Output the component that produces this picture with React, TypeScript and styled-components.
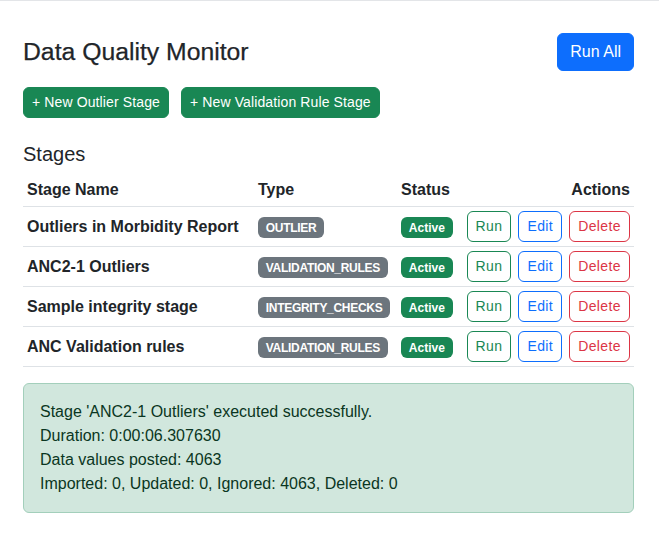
import React from "react";
import styled, { createGlobalStyle } from "styled-components";

const GlobalStyle = createGlobalStyle`
  html, body {
    margin: 0;
    padding: 0;
    background: #ffffff;
  }
  body {
    font-family: "Liberation Sans", Arial, sans-serif;
    font-size: 16px;
    line-height: 1.5;
    color: #212529;
  }
  * { box-sizing: border-box; }
`;

const Page = styled.div`
  border-top: 1px solid #e3e5e8;
  padding: 32px 25px 24px 23px;
`;

const HeaderRow = styled.div`
  display: flex;
  align-items: center;
  justify-content: space-between;
  margin-bottom: 16px;
`;

const Title = styled.h3`
  margin: 0;
  font-size: 24.75px;
  font-weight: 500;
  line-height: 1.2;
  color: #212529;
  -webkit-text-stroke: 0.25px #212529;
`;

type Variant = "primary" | "success";
const solid: Record<Variant, string> = {
  primary: "#0d6efd",
  success: "#198754",
};

const SolidButton = styled.button<{ $variant: Variant; $small?: boolean }>`
  font-family: inherit;
  display: inline-block;
  border: 1px solid ${(p) => solid[p.$variant]};
  background: ${(p) => solid[p.$variant]};
  color: #fff;
  font-size: ${(p) => (p.$small ? "14px" : "16px")};
  line-height: 1.5;
  padding: ${(p) => (p.$small ? "4px 8px" : "6px 12px")};
  letter-spacing: ${(p) => (p.$small ? "0.12px" : "0")};
  border-radius: 6px;
  cursor: pointer;
`;

const Toolbar = styled.div`
  display: flex;
  gap: 12px;
  margin-bottom: 24px;
`;

const SectionTitle = styled.h5`
  margin: 0 0 8px;
  font-size: 20px;
  font-weight: 500;
  line-height: 1.2;
`;

const Table = styled.table`
  width: 100%;
  border-collapse: collapse;
  table-layout: fixed;
  margin-bottom: 16px;
`;

const Th = styled.th<{ $width?: number; $right?: boolean }>`
  width: ${(p) => (p.$width ? `${p.$width}px` : "auto")};
  text-align: ${(p) => (p.$right ? "right" : "left")};
  padding: 4px;
  font-weight: 700;
  line-height: 24px;
  border-bottom: 1px solid #dee2e6;
`;

const Td = styled.td<{ $bold?: boolean; $right?: boolean }>`
  padding: 4px;
  vertical-align: middle;
  font-weight: ${(p) => (p.$bold ? 700 : 400)};
  text-align: ${(p) => (p.$right ? "right" : "left")};
  border-bottom: 1px solid #dee2e6;
  white-space: nowrap;
`;

const Badge = styled.span<{ $tone: "secondary" | "success" }>`
  display: inline-block;
  font-size: 12px;
  font-weight: 700;
  line-height: 1;
  padding: 4.2px 7.8px;
  border-radius: 6px;
  color: #fff;
  background: ${(p) => (p.$tone === "success" ? "#198754" : "#6c757d")};
  letter-spacing: ${(p) => (p.$tone === "secondary" ? "-0.3px" : "0")};
`;

const Actions = styled.div`
  display: flex;
  justify-content: flex-end;
  gap: 7px;
`;

const OutlineButton = styled.button<{ $color: string }>`
  font-family: inherit;
  font-size: 14px;
  line-height: 1.5;
  padding: 4px 8px;
  letter-spacing: 0.4px;
  border-radius: 6px;
  border: 1px solid ${(p) => p.$color};
  color: ${(p) => p.$color};
  background: transparent;
  cursor: pointer;
`;

const Alert = styled.div`
  background: #d1e7dd;
  border: 1px solid #a3cfbb;
  color: #0a3622;
  border-radius: 6px;
  padding: 16px;
`;

const AlertLine = styled.div`
  line-height: 24px;
`;

const stages = [
  { name: "Outliers in Morbidity Report", type: "OUTLIER" },
  { name: "ANC2-1 Outliers", type: "VALIDATION_RULES" },
  { name: "Sample integrity stage", type: "INTEGRITY_CHECKS" },
  { name: "ANC Validation rules", type: "VALIDATION_RULES" },
];

export default function App() {
  return (
    <Page>
      <GlobalStyle />
      <HeaderRow>
        <Title>Data Quality Monitor</Title>
        <SolidButton $variant="primary">Run All</SolidButton>
      </HeaderRow>
      <Toolbar>
        <SolidButton $variant="success" $small>
          + New Outlier Stage
        </SolidButton>
        <SolidButton $variant="success" $small>
          + New Validation Rule Stage
        </SolidButton>
      </Toolbar>
      <SectionTitle>Stages</SectionTitle>
      <Table>
        <thead>
          <tr>
            <Th $width={231}>Stage Name</Th>
            <Th $width={143}>Type</Th>
            <Th $width={67}>Status</Th>
            <Th $right>Actions</Th>
          </tr>
        </thead>
        <tbody>
          {stages.map((s) => (
            <tr key={s.name}>
              <Td $bold>{s.name}</Td>
              <Td>
                <Badge $tone="secondary">{s.type}</Badge>
              </Td>
              <Td>
                <Badge $tone="success">Active</Badge>
              </Td>
              <Td $right>
                <Actions>
                  <OutlineButton $color="#198754">Run</OutlineButton>
                  <OutlineButton $color="#0d6efd">Edit</OutlineButton>
                  <OutlineButton $color="#dc3545">Delete</OutlineButton>
                </Actions>
              </Td>
            </tr>
          ))}
        </tbody>
      </Table>
      <Alert>
        <AlertLine>Stage 'ANC2-1 Outliers' executed successfully.</AlertLine>
        <AlertLine>Duration: 0:00:06.307630</AlertLine>
        <AlertLine>Data values posted: 4063</AlertLine>
        <AlertLine>Imported: 0, Updated: 0, Ignored: 4063, Deleted: 0</AlertLine>
      </Alert>
    </Page>
  );
}
